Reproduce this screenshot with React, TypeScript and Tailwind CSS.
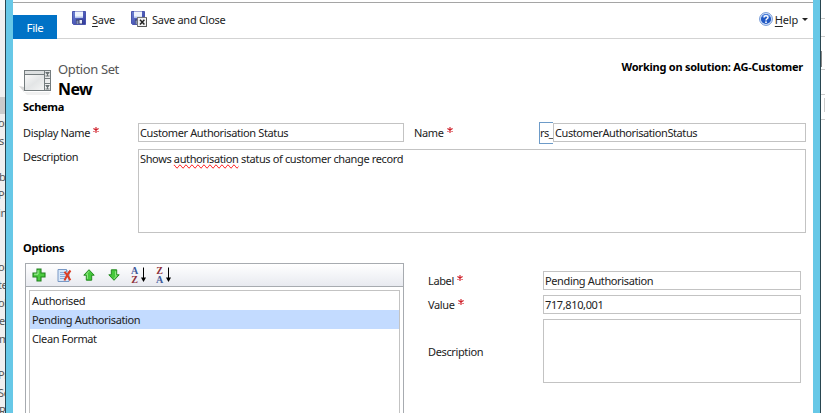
import React from "react";

const leftFragments = ["or", "s", "", "b", "Pr", "in", "", "", "ol", "te", "ol", "e", "m", "", "Pr", "Se", "R"];
const options = ["Authorised", "Pending Authorisation", "Clean Format"];

function Required() {
  return (
    <svg width="6" height="6" viewBox="0 0 6 6" className="mb-[5px] ml-[3px] shrink-0">
      <path d="M3 0v6M0.4 1.5l5.2 3M5.6 1.5l-5.2 3" stroke="#cf1c26" strokeWidth="1.1" />
    </svg>
  );
}

function Label({ children, required }: { children: React.ReactNode; required?: boolean }) {
  return (
    <div className="flex h-[19px] items-center whitespace-nowrap">
      <span>{children}</span>
      {required && <Required />}
    </div>
  );
}

function Floppy({ close }: { close?: boolean }) {
  return (
    <svg width="17" height="16" viewBox="0 0 17 16" className="shrink-0">
      <defs>
        <linearGradient id="disk" x1="0" y1="0" x2="1" y2="1">
          <stop offset="0" stopColor="#6d83d6" />
          <stop offset="1" stopColor="#30379c" />
        </linearGradient>
      </defs>
      <path d="M0.5 0.5h13v13h-12l-1-1z" fill="url(#disk)" stroke="#4a55ad" />
      <path d="M3 0.5h8v6H3z" fill="#eef3fc" />
      <path d="M3 5.5h8v1.4H3z" fill="#b9c8ec" />
      <path d="M4 8.5h6.5V13H4z" fill="#343b66" />
      <path d="M4.5 9.5h2V13h-2z" fill="#8391ba" />
      <path d="M7.5 9h2.5v3.5H7.5z" fill="#e8ecf8" />
      {close && (
        <g>
          <rect x="6.5" y="6.5" width="9" height="9" fill="#f2f2f2" stroke="#777" />
          <path d="M15.5 7v8.5H7" fill="none" stroke="#555" />
          <path d="M9 8.8l4.4 4.6M13.4 8.8L9 13.4" stroke="#222" strokeWidth="1.5" />
        </g>
      )}
    </svg>
  );
}

function HelpIcon() {
  return (
    <svg width="14" height="14" viewBox="0 0 14 14">
      <circle cx="7" cy="7" r="6.4" fill="#dce9fb" stroke="#6f95d5" />
      <circle cx="7" cy="7" r="5.1" fill="#2159c4" />
      <path d="M2.5 5a5 5 0 0 1 9 0Q7 3 2.5 5z" fill="#5b8fe6" />
      <path d="M5 5.6C5 3.2 9 3.2 9 5.4 9 6.8 7 6.7 7 8.4" fill="none" stroke="#fff" strokeWidth="1.5" />
      <rect x="6.2" y="9.4" width="1.6" height="1.6" fill="#fff" />
    </svg>
  );
}

function OptionSetIcon() {
  return (
    <svg width="33" height="28" viewBox="0 0 33 28" className="shrink-0">
      <defs>
        <linearGradient id="panel" x1="0" y1="0" x2="1" y2="1">
          <stop offset="0" stopColor="#fff" />
          <stop offset="0.5" stopColor="#e3e5e6" />
          <stop offset="1" stopColor="#fafafa" />
        </linearGradient>
      </defs>
      <path d="M0 18l5 1v5z" fill="#d7d7d7" />
      <path d="M5 24h27l-2 3H8z" fill="#f1f1f1" />
      <rect x="5.5" y="2.5" width="26" height="20" fill="url(#panel)" stroke="#747c7e" />
      <path d="M6 3h25v3H6z" fill="#dde0e1" />
      <path d="M5 6.5h20M25.5 3v19M26 10.5h5M26 15.5h5" stroke="#747c7e" />
      <path d="M26.5 4.5h4M28.5 4v4M26.5 8h4M26.5 17.5h4M28.5 18v3M26.5 21h4" stroke="#697173" />
      <path d="M26.8 5l1.7 2 1.7-2zM26.8 18l1.7 2.5 1.7-2.5z" fill="#697173" />
    </svg>
  );
}

function AddIcon() {
  return (
    <svg width="14" height="14" viewBox="0 0 14 14">
      <path d="M5 1h4v4h4v4H9v4H5V9H1V5h4z" fill="#4bcb3f" stroke="#21821f" strokeWidth="1.1" />
      <path d="M6 2.2v4H2.2" fill="none" stroke="#a9efa0" />
    </svg>
  );
}

function DeleteIcon() {
  return (
    <svg width="15" height="14" viewBox="0 0 15 14">
      <path d="M1 1.5h8.5L12 4v9.5H1z" fill="#d8e8fa" stroke="#7898c5" />
      <path d="M9.5 1.5V4H12" fill="#fff" stroke="#7898c5" />
      <path d="M3 4.5h5M3 6.5h5M3 8.5h5M3 10.5h5" stroke="#8badd9" />
      <path d="M7.5 3.8c2 2 4 5 5.8 8.5M13.5 2.5C11 5.5 9 8.5 7.5 12.5" stroke="#da3d25" strokeWidth="2" fill="none" />
    </svg>
  );
}

function ArrowIcon({ down }: { down?: boolean }) {
  return (
    <svg width="12" height="12" viewBox="0 0 12 12" className={down ? "rotate-180" : ""}>
      <path d="M6 0.7L11.2 6.2H8.7v5H3.3v-5H0.8z" fill="#45c83c" stroke="#258a22" strokeLinejoin="round" />
      <path d="M6 2.2L3.4 5.3h1v4.5" fill="none" stroke="#a0ec92" strokeWidth="0.9" />
    </svg>
  );
}

function SortIcon({ reverse }: { reverse?: boolean }) {
  return (
    <div className="flex h-[17px] w-4 font-['Liberation_Serif',serif] text-[10px] font-bold leading-[9px] tracking-normal">
      <div className="-mt-px flex w-[7px] flex-col items-center">
        <span className={reverse ? "text-[#8d3039]" : "text-[#3f5b9b]"}>{reverse ? "Z" : "A"}</span>
        <span className={reverse ? "text-[#3f5b9b]" : "text-[#8d3039]"}>{reverse ? "A" : "Z"}</span>
      </div>
      <svg width="6" height="16" viewBox="0 0 6 16" className="ml-[2px]">
        <path d="M3.5 0.5v12" stroke="#000" />
        <path d="M1 10.5h5L3.5 15z" fill="#000" />
      </svg>
    </div>
  );
}

const field = "flex items-center border border-[#c3c3c3] bg-white pl-px whitespace-nowrap";

export default function App() {
  return (
    <div className="flex h-[413px] w-[825px] overflow-hidden bg-white font-['Noto_Sans','Open_Sans',sans-serif] text-[11px] leading-[15px] tracking-[-0.37px] text-[#222]">
      <aside className="h-full w-[5px] shrink-0 overflow-hidden bg-[#f0f0f0] text-[#555]">
        <div className="h-[10px] bg-[#fafafa]" />
        <div className="mt-[87px] -mb-px h-[17px] bg-[#cbcbcb]" />
        {leftFragments.map((text, i) => (
          <div key={i} className={`flex h-[18px] items-center ${text.length > 1 ? "-ml-[2px]" : "-ml-px"}`}>{text}</div>
        ))}
      </aside>
      <div className="h-full w-px shrink-0 bg-[#294651]" />
      <div className="h-full w-[7px] shrink-0 bg-[#67c8e7]" />

      <main className="flex h-full w-[800px] shrink-0 flex-col">
        <header className="mt-[2px] flex h-[37px] shrink-0 justify-between border-t border-b border-t-[#a5a5a5] border-b-[#d3d3d3]">
          <div className="flex">
            <div className="mt-3 -mb-px flex h-6 w-11 items-center justify-center bg-[#0072c6] pt-px text-[11.5px] text-white">File</div>
            <div className="ml-[15px] flex h-[32px] items-center">
              <Floppy />
              <span className="ml-[3px] tracking-[-0.25px]"><u className="underline-offset-2">S</u>ave</span>
            </div>
            <div className="ml-4 flex h-[32px] items-center">
              <Floppy close />
              <span className="ml-1 tracking-[-0.28px]">Save and Close</span>
            </div>
          </div>
          <div className="mr-[5px] flex h-[32px] items-center">
            <HelpIcon />
            <span className="ml-[2px] tracking-[-0.2px]"><u className="underline-offset-2">H</u>elp</span>
            <span className="ml-[4px] border-x-[3px] border-t-[3px] border-x-transparent border-t-[#222]" />
          </div>
        </header>

        <section className="flex h-[60px] shrink-0 justify-between pt-[20px] pr-[10px] pl-[6px]">
          <div className="flex">
            <div className="pt-[9px]"><OptionSetIcon /></div>
            <div className="ml-[6px] whitespace-nowrap">
              <div className="text-[13px] leading-[20px] text-[#555]">Option Set</div>
              <div className="text-[16px] font-bold leading-[20px] tracking-[-0.6px] text-black">New</div>
            </div>
          </div>
          <strong className="tracking-[-0.25px] text-black">Working on solution: AG-Customer</strong>
        </section>

        <section className="flex shrink-0 flex-col pl-[10px]">
          <h2 className="h-6 font-bold tracking-[-0.3px] text-black">Schema</h2>
          <div className="flex h-[26px]">
            <div className="w-[115px]"><Label required>Display Name</Label></div>
            <div className={`${field} h-[19px] w-[266px]`}>Customer Authorisation Status</div>
            <div className="ml-[10px] w-[125px]"><Label required>Name</Label></div>
            <div className="-mt-px flex h-[22px] w-[14px] shrink-0 items-center border border-r-0 border-[#6d9bc8] pb-px tracking-[-0.55px]">rs_</div>
            <div className={`${field} h-[19px] w-[253px] tracking-[-0.41px]`}>CustomerAuthorisationStatus</div>
          </div>
          <div className="flex h-[91px]">
            <div className="-mt-[2px] w-[115px]"><Label>Description</Label></div>
            <div className="h-[84px] w-[668px] border border-[#c3c3c3] pt-px pl-px">
              Shows <span className="[text-decoration-line:spelling-error]">authorisation</span> status of customer change record
            </div>
          </div>
          <h2 className="h-[23px] font-bold tracking-[-0.3px] text-black">Options</h2>
        </section>

        <section className="flex min-h-0 flex-1 pl-3">
          <div className="flex w-[379px] flex-col border border-b-0 border-[#a7abb0]">
            <div className="flex h-[23px] shrink-0 items-center border-b border-[#a7abb0] bg-linear-to-b from-white to-[#e8eaf0] pl-[6px]">
              <AddIcon />
              <div className="ml-[11px]"><DeleteIcon /></div>
              <div className="ml-[11px]"><ArrowIcon /></div>
              <div className="ml-[13px]"><ArrowIcon down /></div>
              <div className="ml-[11px]"><SortIcon /></div>
              <div className="ml-[9px]"><SortIcon reverse /></div>
            </div>
            <ul className="mx-[3px] mt-[3px] flex-1 border border-b-0 border-[#c3c3c3]">
              {options.map((text, i) => (
                <li key={text} className={`flex h-[19px] items-center pl-[2px] ${i === 1 ? "bg-[#c3dbff]" : ""}`}>{text}</li>
              ))}
            </ul>
          </div>
          <div className="ml-6 flex w-[373px] flex-col gap-[5px] pt-2">
            <div className="flex">
              <div className="w-[115px]"><Label required>Label</Label></div>
              <div className={`${field} h-[19px] flex-1`}>Pending Authorisation</div>
            </div>
            <div className="flex">
              <div className="w-[115px]"><Label required>Value</Label></div>
              <div className={`${field} h-[19px] flex-1`}>717,810,001</div>
            </div>
            <div className="flex items-center">
              <div className="w-[115px]"><Label>Description</Label></div>
              <div className="h-16 flex-1 border border-[#c3c3c3]" />
            </div>
          </div>
        </section>
      </main>

      <div className="h-full w-[7px] shrink-0 bg-[#67c8e7]" />
      <div className="h-full w-px shrink-0 bg-[#294651]" />
      <aside className="flex h-full w-1 shrink-0 flex-col">
        <div className="h-[19px] border-b border-[#ccc]" />
        <div className="h-[18px] border-b border-[#ccc]" />
        <div className="mt-[14px] h-4 w-px bg-[#888]" />
        <div className="h-[3px] border-b border-[#ccc]" />
        <div className="h-[25px] border-b border-[#ccc]" />
        <div className="mt-[3px] ml-[3px] h-[14px] w-px bg-[#ccc]" />
        <div className="h-2 border-b border-[#ccc]" />
      </aside>
    </div>
  );
}
